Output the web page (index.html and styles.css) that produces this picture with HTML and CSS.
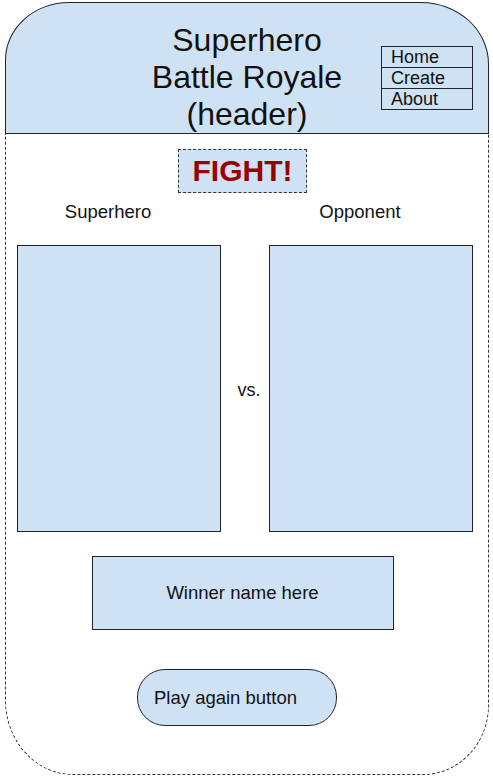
FILE: index.html
```html
<!doctype html>
<html lang="en">
  <head>
    <meta charset="UTF-8">
    <meta name="viewport" content="width=device-width, initial-scale=1.0">
    <title>Superhero Battle Royale</title>
    <link rel="stylesheet" href="styles.css">
  </head>
  <body>
    <div class="page">
      <!-- Header with title and nav -->
      <header class="site-header">
        <h1 class="site-title">Superhero<br>Battle Royale<br>(header)</h1>
        <nav class="site-nav">
          <a href="#">Home</a>
          <a href="#">Create</a>
          <a href="#">About</a>
        </nav>
      </header>
      <!-- Battle area -->
      <main class="battle">
        <div class="fight">FIGHT!</div>
        <div class="arena">
          <span class="arena-label">Superhero</span>
          <span class="arena-label arena-label-right">Opponent</span>
          <div class="fighter"></div>
          <span class="versus">vs.</span>
          <div class="fighter"></div>
        </div>
        <div class="winner">Winner name here</div>
        <button class="play-again">Play again button</button>
      </main>
    </div>
  </body>
</html>
```

FILE: styles.css
```css
:root {
  --fill: #cfe2f3;
  --line: #1c2530;
  --text: #111;
}
body {
  font-family: 'Liberation Sans', Arial, sans-serif;
  background: #fff;
  color: var(--text);
  margin: 0;
  padding: 0;
}
.page {
  width: 484px;
  margin: 2px 0 0 5px;
}
/* Header */
.site-header {
  display: grid;
  grid-template-columns: 1fr auto 1fr;
  align-items: start;
  background: var(--fill);
  border: 1px solid var(--line);
  border-radius: 64px 68px 0 0 / 58px 62px 0 0;
  padding: 19px 0 0 0;
}
.site-title {
  grid-column: 2;
  margin: 0;
  font-size: 32px;
  font-weight: 400;
  line-height: 37px;
  text-align: center;
}
.site-nav {
  grid-column: 3;
  justify-self: end;
  margin: 24px 15px 0 0;
  width: 90px;
  border: 1px solid var(--line);
  display: flex;
  flex-direction: column;
}
.site-nav a {
  display: block;
  padding-left: 9px;
  font-size: 18px;
  line-height: 20px;
  color: var(--text);
  text-decoration: none;
}
.site-nav a + a {
  border-top: 1px solid var(--line);
}
/* Battle area */
.battle {
  display: flex;
  flex-direction: column;
  align-items: center;
  border: 1px dashed #333;
  border-top: none;
  border-radius: 0 0 66px 68px / 0 0 70px 75px;
  padding-bottom: 48px;
}
.fight {
  margin: 15px 9px 0 0;
  padding: 6px 14px;
  background: var(--fill);
  border: 1px dashed #333;
  color: #990000;
  font-size: 30px;
  font-weight: 700;
  line-height: 30px;
}
.arena {
  align-self: flex-start;
  margin: 8px 0 0 11px;
  display: grid;
  grid-template-columns: 204px 48px 204px;
  grid-template-rows: 21px 287px;
  row-gap: 23px;
  align-items: center;
}
.arena-label {
  font-size: 18.5px;
  line-height: 21px;
  text-align: center;
  padding-right: 22px;
}
.arena-label-right {
  grid-column: 3;
}
.fighter {
  height: 100%;
  box-sizing: border-box;
  background: var(--fill);
  border: 1px solid var(--line);
}
.versus {
  font-size: 18px;
  text-align: center;
  padding: 4px 0 0 8px;
}
.winner {
  margin: 24px 9px 0 0;
  width: 302px;
  height: 74px;
  box-sizing: border-box;
  display: flex;
  align-items: center;
  justify-content: center;
  background: var(--fill);
  border: 1px solid var(--line);
  font-size: 18.5px;
}
.play-again {
  margin: 39px 20px 0 0;
  width: 200px;
  height: 57px;
  padding: 0 0 0 16px;
  text-align: left;
  background: var(--fill);
  border: 1px solid var(--line);
  border-radius: 28px;
  font-family: inherit;
  font-size: 18.5px;
  color: var(--text);
  cursor: pointer;
}
```
